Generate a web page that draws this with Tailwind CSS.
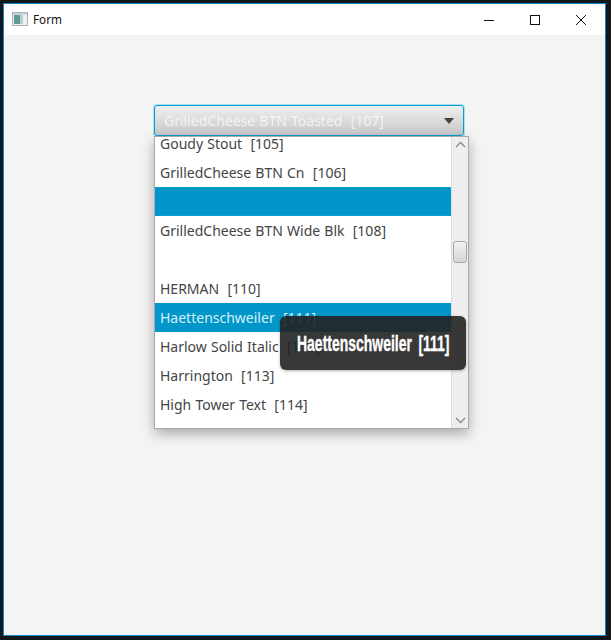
<!DOCTYPE html>
<html><head><meta charset="utf-8"><script src="https://cdn.jsdelivr.net/npm/@tailwindcss/browser@4"></script></head>
<body class="w-[611px] h-[640px] overflow-hidden bg-[#10181c] font-['Open_Sans','Noto_Sans',sans-serif]">
<div class="ml-[3px] mt-[3px] w-[603px] h-[633px] border border-[#1683c4] bg-[#f4f4f4] flex flex-col">
  <div class="h-[31px] bg-white flex items-center shrink-0">
    <svg class="ml-[8px] mt-[-2px]" width="16" height="14" viewBox="0 0 16 14"><rect x="0.5" y="0.5" width="15" height="13" fill="#eef2f2" stroke="#a9b3b8"/><rect x="2" y="3" width="6" height="9" fill="#5f9c98"/><rect x="8" y="3" width="3" height="9" fill="#b9d0ce"/><rect x="1" y="1" width="14" height="2" fill="#c9d5dc"/></svg>
    <span class="ml-[5px] text-[11.7px] text-[#111] font-['Noto_Sans',sans-serif]">Form</span>
    <div class="ml-auto flex items-center h-full">
      <div class="w-[46px] flex justify-center"><svg width="12" height="12" viewBox="0 0 12 12"><path d="M1 6.5h10" stroke="#111" fill="none"/></svg></div>
      <div class="w-[46px] flex justify-center"><svg width="12" height="12" viewBox="0 0 12 12"><rect x="1.5" y="1.5" width="9" height="9" stroke="#111" fill="none"/></svg></div>
      <div class="w-[46px] flex justify-center mr-[1px]"><svg width="12" height="12" viewBox="0 0 12 12"><path d="M1 1l10 10M11 1L1 11" stroke="#111" fill="none"/></svg></div>
    </div>
  </div>
  <div class="relative flex-1">
    <div class="ml-[150px] mt-[70px] w-[310px] h-[31px] rounded-[3px] border border-[#039ed3] shadow-[0_0_0_1px_#a8dff2] bg-gradient-to-b from-[#efefef] to-[#c8c8c8] flex items-center pl-[9px] pr-[9px]">
      <span class="text-[14px] text-white/70 whitespace-pre [word-spacing:0.5px] font-['Noto_Sans',sans-serif]">GrilledCheese BTN Toasted  [107]</span>
      <svg class="ml-auto" width="10" height="6" viewBox="0 0 10 6"><path d="M0 0h10L5 6z" fill="#444"/></svg>
    </div>
    <div class="ml-[150px] w-[315px] h-[293px] bg-white border border-[#a9a9a9] shadow-[0_5px_12px_rgba(0,0,0,0.3)] flex overflow-hidden text-[14px] text-[#444] [word-spacing:0.5px] font-['Noto_Sans',sans-serif]">
      <div class="w-[296px] -mt-[8px] shrink-0">
        <div class="h-[29px] px-[5px] flex items-center whitespace-pre">Goudy Stout  [105]</div>
        <div class="h-[29px] px-[5px] flex items-center whitespace-pre">GrilledCheese BTN Cn  [106]</div>
        <div class="h-[29px] bg-[#0096c9] border border-[#039ed3] shadow-[inset_0_0_0_1px_#0093c4]"></div>
        <div class="h-[29px] px-[5px] flex items-center whitespace-pre">GrilledCheese BTN Wide Blk  [108]</div>
        <div class="h-[29px]"></div>
        <div class="h-[29px] px-[5px] flex items-center whitespace-pre">HERMAN  [110]</div>
        <div class="h-[29px] px-[5px] flex items-center whitespace-pre bg-[#0096c9] text-[#d6f1fb]">Haettenschweiler  [111]</div>
        <div class="h-[29px] px-[5px] flex items-center whitespace-pre">Harlow Solid Italic  [112]</div>
        <div class="h-[29px] px-[5px] flex items-center whitespace-pre">Harrington  [113]</div>
        <div class="h-[29px] px-[5px] flex items-center whitespace-pre">High Tower Text  [114]</div>
      </div>
      <div class="w-[17px] ml-auto bg-[#eeeeee] border-l border-[#dcdcdc] flex flex-col items-center">
        <svg class="mt-[4px]" width="11" height="7" viewBox="0 0 11 7"><path d="M1 6l4.5-4.5L10 6" stroke="#8a8a8a" stroke-width="1.3" fill="none"/></svg>
        <div class="mt-[93px] w-[14px] h-[22px] rounded-[3px] border border-[#a8a8a8] bg-gradient-to-b from-[#f2f2f2] to-[#d6d6d6]"></div>
        <svg class="mt-auto mb-[4px]" width="11" height="7" viewBox="0 0 11 7"><path d="M1 1l4.5 4.5L10 1" stroke="#8a8a8a" stroke-width="1.3" fill="none"/></svg>
      </div>
    </div>
    <div class="absolute left-[276px] top-[281px] w-[186px] h-[54px] rounded-[6px] bg-[#222]/90 shadow-[0_1px_3px_rgba(0,0,0,0.3)] flex items-center overflow-hidden">
      <span class="ml-[17px] origin-left scale-x-[0.635] font-bold text-[22px] text-white whitespace-pre [word-spacing:-1px] [-webkit-text-stroke:0.4px_white] font-['Liberation_Sans',sans-serif]">Haettenschweiler  [111]</span>
    </div>
  </div>
</div>
</body></html>
